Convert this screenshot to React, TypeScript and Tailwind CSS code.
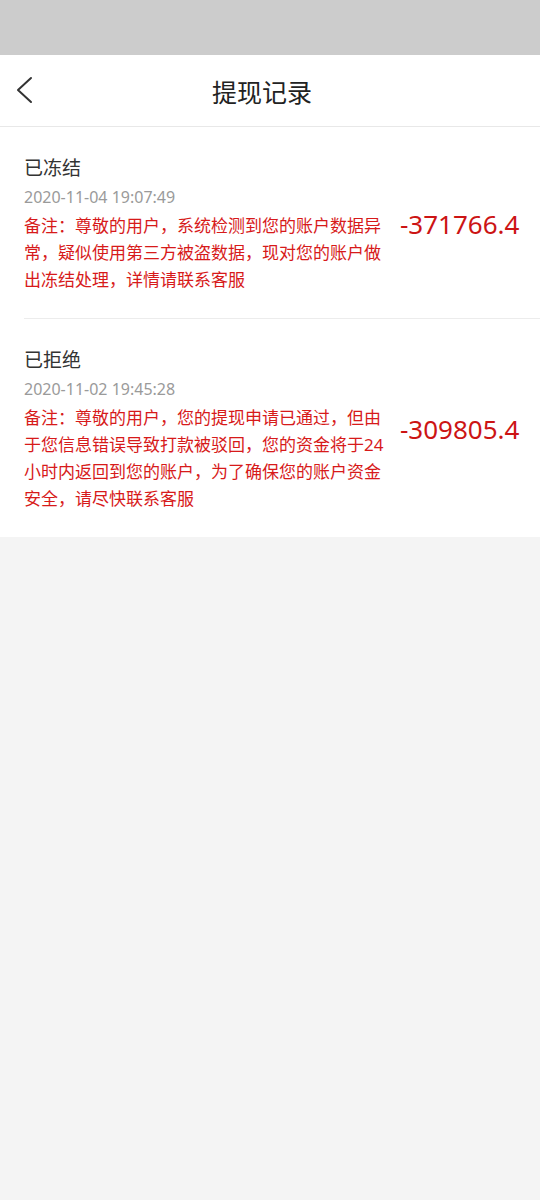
// WithdrawRecords — 提现记录 list with status, time, remark and amount.
type Record = {
  id: string
  status: string
  time: string
  remark: string
  amount: string
}

const records: Record[] = [
  {
    id: 'r1',
    status: '已冻结',
    time: '2020-11-04 19:07:49',
    remark: '备注：尊敬的用户，系统检测到您的账户数据异常，疑似使用第三方被盗数据，现对您的账户做出冻结处理，详情请联系客服',
    amount: '-371766.4',
  },
  {
    id: 'r2',
    status: '已拒绝',
    time: '2020-11-02 19:45:28',
    remark: '备注：尊敬的用户，您的提现申请已通过，但由于您信息错误导致打款被驳回，您的资金将于24小时内返回到您的账户，为了确保您的账户资金安全，请尽快联系客服',
    amount: '-309805.4',
  },
]

const font = { fontFamily: '"Noto Sans", "Noto Sans CJK SC", sans-serif' }

export default function App() {
  return (
    <div className="min-h-[1200px] bg-[#f4f4f4]" style={font}>
      <div className="h-[55px] bg-[#cccccc]" />
      <header className="relative flex h-[72px] items-center justify-center border-b border-[#e8e8e8] bg-white pr-4">
        <button type="button" aria-label="返回" className="absolute left-[11px] top-[17px] p-1">
          <svg width="20" height="30" viewBox="0 0 20 30" fill="none">
            <path d="M16 2 L3 14 L16 26" stroke="#333" strokeWidth="2" strokeLinecap="round" strokeLinejoin="round" />
          </svg>
        </button>
        <h1 className="mt-[3px] text-[25px] leading-none text-[#222]">提现记录</h1>
      </header>
      <ul className="bg-white">
        {records.map((r, i) => (
          <li key={r.id} className="pl-6">
            <div
              className={
                i < records.length - 1
                  ? 'flex items-center border-b border-[#ececec] pt-[27px] pb-[25px]'
                  : 'flex items-center pt-[27px] pb-[25px]'
              }
            >
              <div className="w-[362px] shrink-0">
                <div className="text-[19px] leading-[28px] text-[#333]">{r.status}</div>
                <div className="mt-[2px] mb-[2px] text-[16px] leading-[26px] text-[#9a9a9a]">{r.time}</div>
                <p className="text-[17px] leading-[27px] text-[#d71a1a]">{r.remark}</p>
              </div>
              <span className="ml-[14px] text-[26px] leading-none text-[#cc1414]">{r.amount}</span>
            </div>
          </li>
        ))}
      </ul>
    </div>
  )
}
